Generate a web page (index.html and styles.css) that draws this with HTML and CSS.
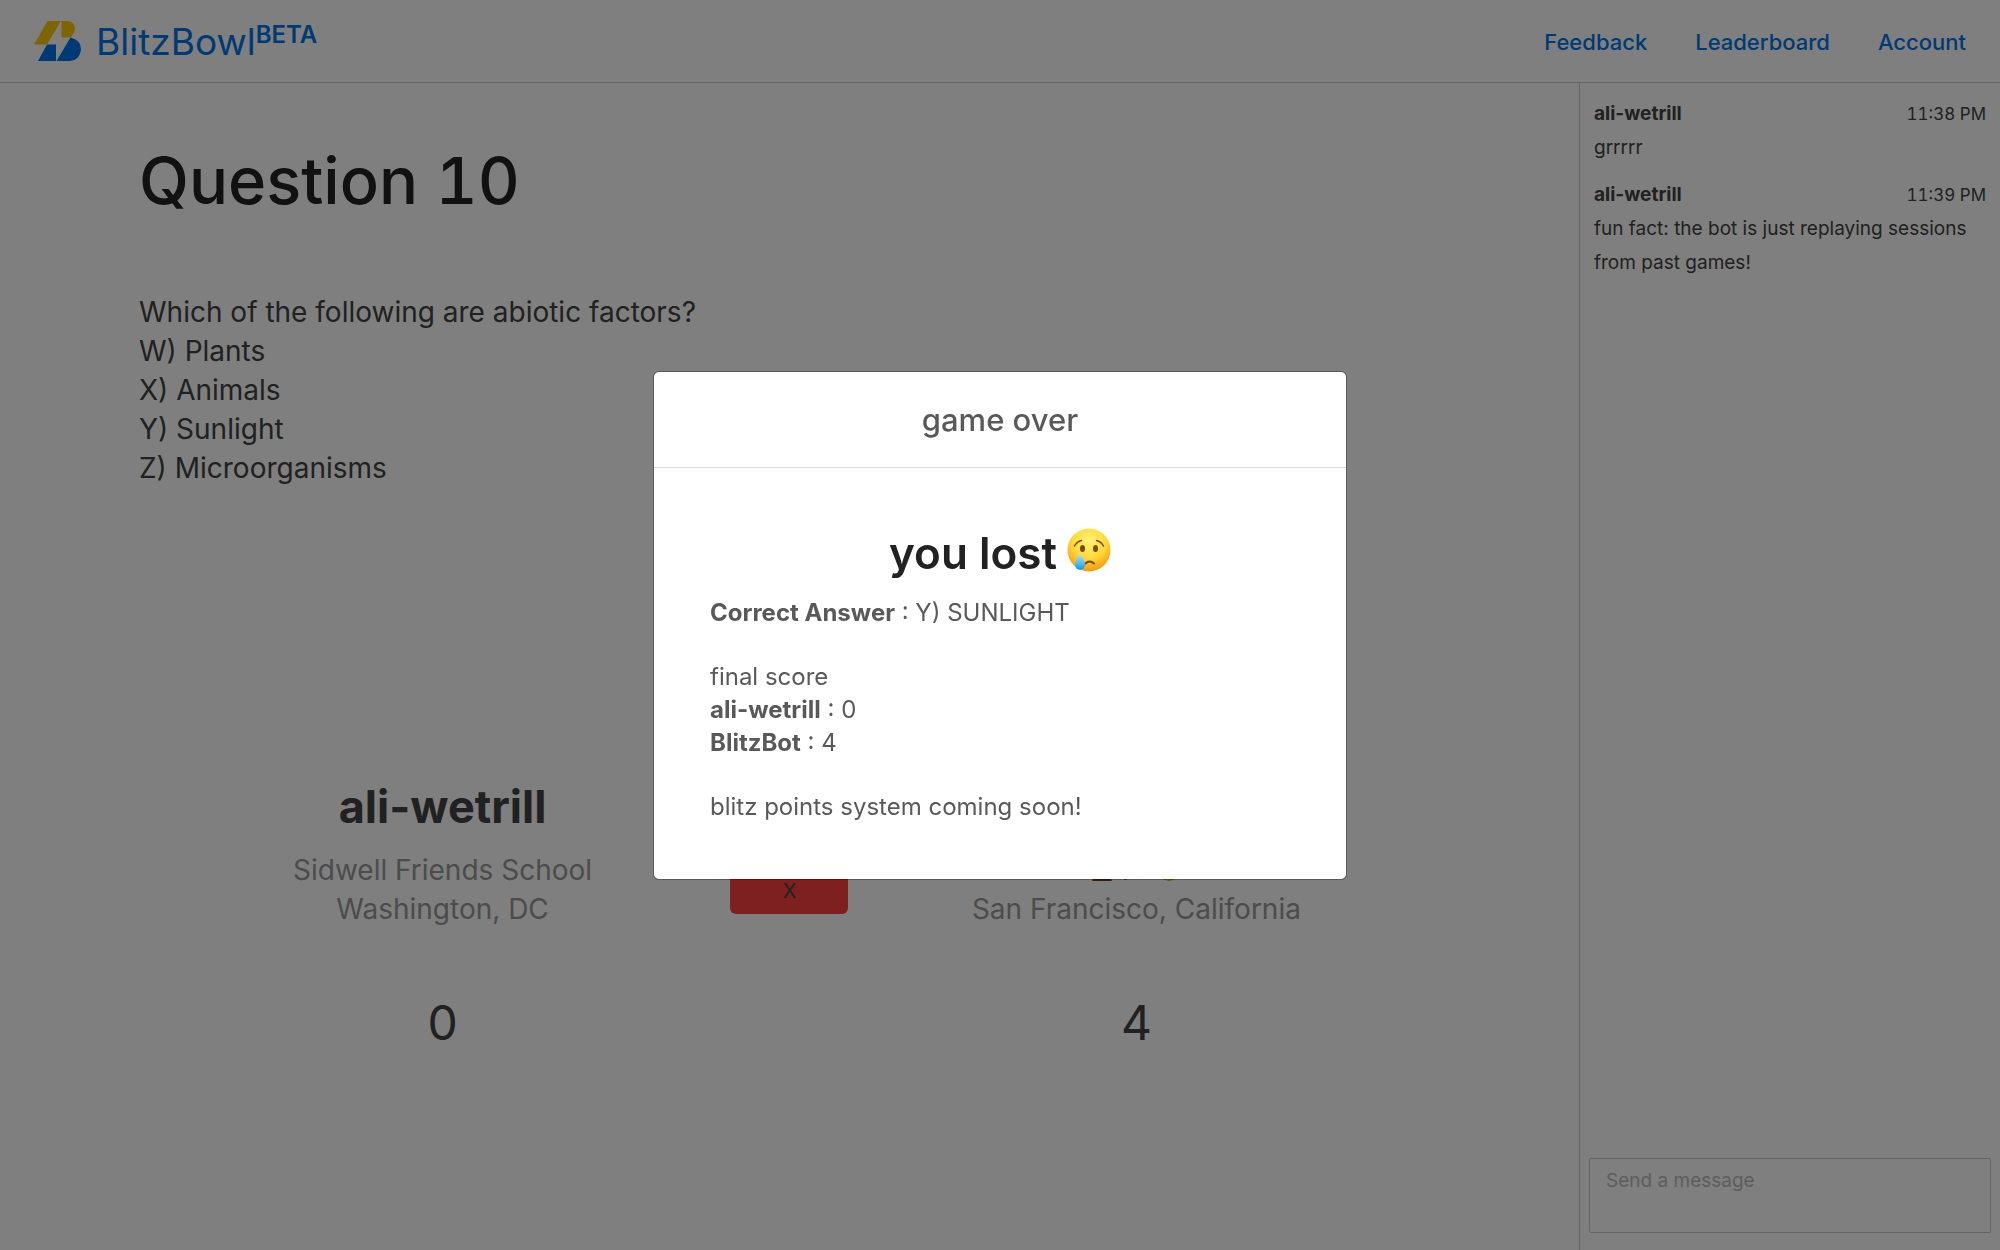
FILE: index.html
```html
<!DOCTYPE html>
<html lang="en">
<head>
<meta charset="utf-8">
<meta name="viewport" content="width=device-width, initial-scale=1">
<title>BlitzBowl</title>
<link rel="stylesheet" href="styles.css">
</head>
<body>
<div class="app">
  <header class="topbar">
    <a class="brand" href="#">
      <svg class="brand-logo" viewBox="0 0 48 40" aria-hidden="true">
        <path fill="#ffc90a" d="M13.500 0H27L13 23.500H0ZM27.500 0H34Q41 1 41 8Q41 10 39 13L37 16.500H27.500Z"/>
        <path fill="#0074e8" d="M13 23.500H22V40H4ZM36.500 16.500Q47 19 47 28.500Q46 39 36 40H22.500Z"/>
      </svg>
      <span class="brand-name">BlitzBowl</span><span class="brand-tag">BETA</span>
    </a>
    <nav class="links">
      <a href="#">Feedback</a>
      <a href="#">Leaderboard</a>
      <a href="#">Account</a>
    </nav>
  </header>
  <div class="body">
    <main class="game">
      <h1 class="title">Question 10</h1>
      <p class="question">Which of the following are abiotic factors?<br>W) Plants<br>X) Animals<br>Y) Sunlight<br>Z) Microorganisms</p>
      <section class="players">
        <div class="player">
          <h2 class="player-name">ali-wetrill</h2>
          <p class="player-info">Sidwell Friends School<br>Washington, DC</p>
          <p class="score">0</p>
        </div>
        <div class="buzz"><button class="answer" type="button">X</button></div>
        <div class="player">
          <h2 class="player-name">BlitzBot</h2>
          <div class="player-info">
            <svg class="badges" viewBox="0 0 88 30" aria-hidden="true">
              <path fill="#ffc90a" d="M1 2H19V12Q16 19 12 20V24H8V20Q4 19 1 12Z"/>
              <path fill="#7c3a0c" d="M3 23H17L20 30H0Z"/>
              <path fill="#e8b800" d="M5 25H15V28H5Z"/>
              <path fill="#e02020" d="M32 4L49 12V24L41 27L32 29Z"/>
              <circle cx="77" cy="20" r="10" fill="#e8a800"/>
              <circle cx="77" cy="21" r="8" fill="#ffe045"/>
            </svg>
            <p>San Francisco, California</p>
          </div>
          <p class="score">4</p>
        </div>
      </section>
    </main>
    <aside class="chat">
      <div class="messages">
        <article class="message">
          <header class="message-head"><strong>ali-wetrill</strong><time>11:38 PM</time></header>
          <p>grrrrr</p>
        </article>
        <article class="message">
          <header class="message-head"><strong>ali-wetrill</strong><time>11:39 PM</time></header>
          <p>fun fact: the bot is just replaying sessions from past games!</p>
        </article>
      </div>
      <textarea class="composer" aria-label="Send a message" placeholder="Send a message"></textarea>
    </aside>
  </div>
</div>
<div class="overlay">
  <section class="modal" role="dialog" aria-modal="true" aria-labelledby="modal-title">
    <h2 class="modal-title" id="modal-title">game over</h2>
    <div class="modal-body">
      <h3 class="result">you lost
        <svg class="face" viewBox="0 0 44 44" role="img" aria-label="crying face">
          <defs>
            <radialGradient id="skin" cx=".5" cy=".3" r=".7">
              <stop offset="0" stop-color="#fff27a"/>
              <stop offset=".55" stop-color="#ffd93b"/>
              <stop offset="1" stop-color="#f59a0c"/>
            </radialGradient>
            <linearGradient id="tear" x1="0" y1="0" x2="0" y2="1">
              <stop offset="0" stop-color="#b9eaff"/>
              <stop offset="1" stop-color="#109bea"/>
            </linearGradient>
          </defs>
          <circle cx="22" cy="22" r="21.500" fill="url(#skin)"/>
          <g fill="#7b4a0c"><ellipse cx="15.500" cy="20.500" rx="2.500" ry="3.500"/><ellipse cx="28.500" cy="20.500" rx="2.500" ry="3.500"/></g>
          <g fill="none" stroke="#7b4a0c" stroke-width="1.500" stroke-linecap="round">
            <path d="M7.500 18Q10 13.500 14.500 12.500M36.500 18Q34 13.500 29.500 12.500"/>
            <path stroke-width="2" d="M18.500 35.500Q22.500 31.500 27 35.500"/>
          </g>
          <path fill="url(#tear)" d="M12.800 25Q8 33 8 37A5 5 0 0 0 18 37Q18 33 12.800 25Z"/>
        </svg>
      </h3>
      <p><strong>Correct Answer</strong> : Y) SUNLIGHT</p>
      <p>final score<br><strong>ali-wetrill</strong> : 0<br><strong>BlitzBot</strong> : 4</p>
      <p>blitz points system coming soon!</p>
    </div>
  </section>
</div>
</body>
</html>
```
FILE: styles.css
```css
* { box-sizing: border-box; margin: 0; padding: 0; }

body {
  font-family: Inter, "Liberation Sans", sans-serif;
  font-size: 19px;
  color: #424242;
  background: #fff;
}

a { color: #0074e8; text-decoration: none; }

.app { display: flex; flex-direction: column; min-height: 100vh; }

.topbar {
  display: flex;
  justify-content: space-between;
  align-items: center;
  height: 83px;
  padding: 0 34px;
  border-bottom: 1px solid #c8c8c8;
}

.brand { display: flex; align-items: center; }
.brand-logo { width: 48px; height: 40px; margin-right: 14px; }
.brand-name { font-size: 37px; line-height: 44px; padding-top: 2px; }
.brand-tag { font-size: 24px; font-weight: 600; line-height: 28px; padding-bottom: 12px; }

.links { display: flex; gap: 48px; padding-top: 2px; font-size: 22px; font-weight: 500; }

.body { display: flex; flex: 1; }

.game { flex: 1; padding: 56px 139px 0; }

.title {
  font-size: 65px;
  line-height: 84px;
  font-weight: 500;
  font-variant-numeric: tabular-nums;
  color: #222;
}
.question { margin-top: 70px; font-size: 28px; line-height: 39px; }

.players {
  display: grid;
  grid-template-columns: repeat(3, 1fr);
  width: 80%;
  margin: 291px auto 0;
  text-align: center;
}

.player-name { font-size: 45px; line-height: 56px; font-weight: 700; white-space: nowrap; }
.player-info { margin-top: 16px; font-size: 28px; line-height: 39px; color: #989898; white-space: nowrap; }
.badges { display: block; width: 88px; height: 30px; margin: 0 auto 9px; }
.score { margin-top: 64px; font-size: 48px; line-height: 60px; }

.buzz { padding-top: 89px; }
.answer {
  width: 118px;
  height: 46px;
  border: 0;
  border-radius: 6px;
  background: #fc4040;
  color: #424242;
  font: 20px/46px Inter, sans-serif;
}

.chat {
  display: flex;
  flex-direction: column;
  justify-content: space-between;
  width: 421px;
  border-left: 1px solid #c8c8c8;
}
.messages { padding: 14px; }
.message { margin-bottom: 13px; line-height: 34px; }
.message-head { display: flex; justify-content: space-between; }
.message-head strong { font-weight: 700; }
.message-head time { font-size: 17px; font-variant-numeric: tabular-nums; }

.composer {
  display: block;
  height: 75px;
  margin: 0 9px 17px;
  padding: 10px 16px;
  border: 1px solid #c8c8c8;
  border-radius: 2px;
  resize: none;
  font: 19px/24px Inter, sans-serif;
}
.composer::placeholder { color: #bbb; opacity: 1; }

.overlay {
  position: fixed;
  inset: 0;
  display: grid;
  place-items: center;
  background: rgba(0, 0, 0, .5);
}

.modal {
  width: 692px;
  border-radius: 5px;
  background: #fff;
  color: #595959;
  box-shadow: 0 0 0 1px rgba(0, 0, 0, .3);
}
.modal-title {
  padding: 28px;
  border-bottom: 1px solid #dcdce0;
  font-size: 31px;
  line-height: 39px;
  font-weight: 500;
  text-align: center;
}
.modal-body { padding: 53px 56px 56px; font-size: 24px; line-height: 33px; }
.modal-body p + p { margin-top: 31px; }
.modal-body strong { font-weight: 700; }
.result {
  display: flex;
  justify-content: center;
  gap: 10px;
  margin-bottom: 11px;
  color: #222;
  font-size: 44px;
  line-height: 64px;
  font-weight: 600;
}
.face { width: 44px; height: 44px; margin-top: 7px; }
```
